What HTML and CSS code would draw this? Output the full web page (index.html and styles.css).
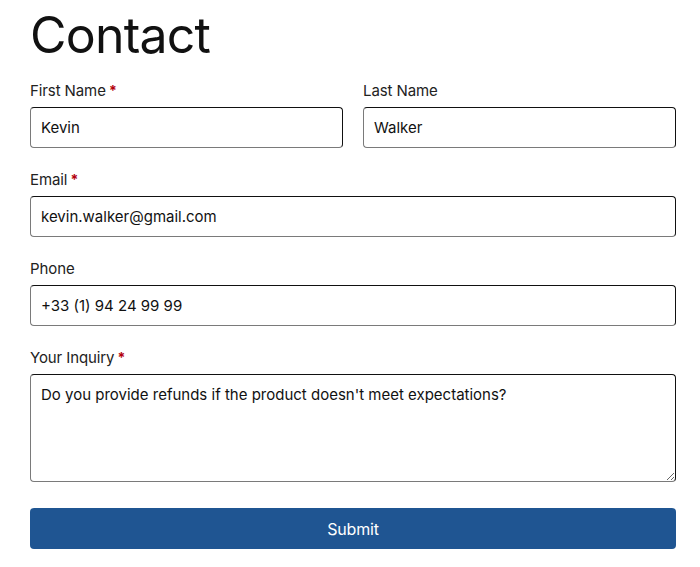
FILE: index.html
```html
<!DOCTYPE html>
<html lang="en">
<head>
<meta charset="utf-8">
<title>Contact</title>
<link rel="stylesheet" href="styles.css">
</head>
<body>
<main class="page">
  <h1 class="title">Contact</h1>
  <form class="form">
    <div class="row">
      <div class="field">
        <label class="label" for="first">First Name <span class="req">*</span></label>
        <input class="input" id="first" type="text" value="Kevin">
      </div>
      <div class="field">
        <label class="label" for="last">Last Name</label>
        <input class="input" id="last" type="text" value="Walker">
      </div>
    </div>
    <div class="field">
      <label class="label" for="email">Email <span class="req">*</span></label>
      <input class="input" id="email" type="email" value="kevin.walker@gmail.com">
    </div>
    <div class="field">
      <label class="label" for="phone">Phone</label>
      <input class="input" id="phone" type="tel" value="+33 (1) 94 24 99 99">
    </div>
    <div class="field">
      <label class="label" for="inquiry">Your Inquiry <span class="req">*</span></label>
      <textarea class="input textarea" id="inquiry">Do you provide refunds if the product doesn't meet expectations?</textarea>
    </div>
    <button class="submit" type="button">Submit</button>
  </form>
</main>
</body>
</html>
```
FILE: styles.css
```css
* { box-sizing: border-box; }
html, body { margin: 0; padding: 0; background: #fff; }
body {
  font-family: Inter, "Noto Sans", "Liberation Sans", sans-serif;
  color: #1a1a1a;
}
.page {
  padding: 0 24px 0 30px;
}
.title {
  margin: 5px 0 14px;
  font-size: 50px;
  line-height: 60px;
  font-weight: 400;
  letter-spacing: -0.8px;
  color: #111;
}
.form {
  display: flex;
  flex-direction: column;
  gap: 20px;
}
.row {
  display: grid;
  grid-template-columns: 1fr 1fr;
  column-gap: 20px;
}
.field {
  display: flex;
  flex-direction: column;
  gap: 4px;
}
.label {
  font-size: 15px;
  line-height: 24px;
  color: #222;
  letter-spacing: -0.1px;
}
.req {
  color: #b3000c;
  font-weight: 700;
  font-size: 14px;
  margin-left: -1px;
}
.input {
  display: block;
  width: 100%;
  height: 41px;
  padding: 8px 10px;
  font: inherit;
  font-size: 15px;
  line-height: 24px;
  letter-spacing: 0;
  color: #111;
  background: #fff;
  border: 1px solid;
  border-color: #111 #111 #7a7a7a #7a7a7a;
  border-radius: 4px;
  outline: none;
}
.textarea {
  height: 108px;
  resize: vertical;
}
.submit {
  margin-top: 6px;
  height: 41px;
  width: 100%;
  border: none;
  border-radius: 4px;
  background: #1f5592;
  color: #fff;
  font: inherit;
  font-size: 16px;
  letter-spacing: -0.2px;
  cursor: pointer;
}
```
